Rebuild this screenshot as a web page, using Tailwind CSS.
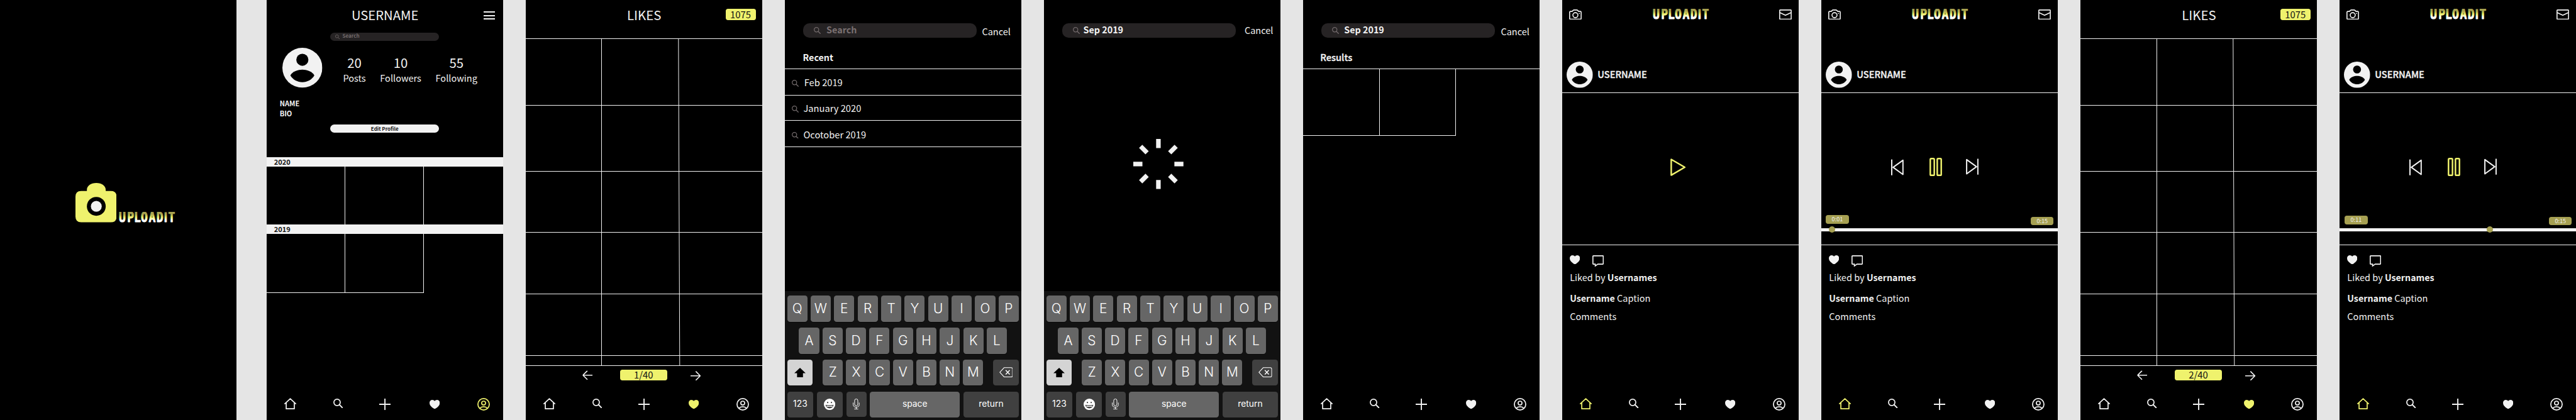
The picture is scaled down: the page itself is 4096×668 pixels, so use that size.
<!DOCTYPE html>
<html lang="en">
<head>
<meta charset="utf-8">
<title>UPLOADIT</title>
<script src="https://cdn.jsdelivr.net/npm/@tailwindcss/browser@4"></script>
</head>
<body class="bg-[#e5e5e5] overflow-hidden font-['Noto_Sans_CJK_SC','Noto_Sans',sans-serif] text-[#f2f2f2]">

<svg class="hidden">
  <symbol id="home" viewBox="0 0 21 20"><path d="M1 10 10.5 1.2 20 10M3.4 8v11h14.2V8" fill="none" stroke="currentColor" stroke-width="1.9" stroke-linejoin="round" stroke-linecap="round"/></symbol>
  <symbol id="search" viewBox="0 0 17 17"><circle cx="6.6" cy="6.6" r="5.6" fill="none" stroke="currentColor" stroke-width="1.9"/><path d="m10.8 10.8 5.2 5.2" stroke="currentColor" stroke-width="2.1" stroke-linecap="round"/></symbol>
  <symbol id="plus" viewBox="0 0 20 20"><path d="M10 0v20M0 10h20" stroke="currentColor" stroke-width="2.1"/></symbol>
  <symbol id="heart" viewBox="0 0 18 16"><path d="M9 16C7.600 15.400 4 13.200 1.700 10.200-.6 7-.4 3 1.500 1.300 3.700-.6 7.400-.2 9 2.300c1.600-2.500 5.300-2.900 7.500-1C18.400 3 18.600 7 16.300 10.200 14 13.200 10.400 15.400 9 16Z" fill="currentColor"/></symbol>
  <symbol id="user" viewBox="0 0 22 22"><g fill="none" stroke="currentColor" stroke-width="1.9"><circle cx="11" cy="11" r="10"/><circle cx="11" cy="8.900" r="3.400"/><path d="M4.200 18c1.900-1.900 4.300-2.600 6.800-2.600s4.900.7 6.800 2.600"/></g></symbol>
  <symbol id="avatar" viewBox="0 0 70 70"><circle cx="35" cy="35" r="35" fill="#f2f2f2"/><circle cx="35" cy="21" r="10.600" fill="#000"/><path d="M14 48.500c3-7 14-10.300 21-10.300s18 3.300 21 10.300C51.500 56 43.500 60.300 35 60.300S18.500 56 14 48.500Z" fill="#000"/></symbol>
  <symbol id="camera" viewBox="0 0 22 18"><g fill="none" stroke="currentColor" stroke-width="1.800" stroke-linejoin="round"><path d="M2.400 3.500h2.900L7.200 1.500Q7.700.9 8.500.9h5q.8 0 1.300.6l1.900 2h2.900q1.500 0 1.500 1.500v10.600q0 1.500-1.500 1.500H2.400q-1.500 0-1.500-1.500V5q0-1.500 1.500-1.500Z"/><circle cx="11" cy="10" r="4.400"/></g><circle cx="17.800" cy="7" r="1" fill="currentColor"/></symbol>
  <symbol id="mail" viewBox="0 0 22 18"><g fill="none" stroke="currentColor" stroke-width="1.800" stroke-linejoin="round"><rect x=".9" y=".9" width="20.200" height="16.200" rx=".8"/><path d="M1 5.400 11 10.200 21 5.400"/></g></symbol>
  <symbol id="bubble" viewBox="0 0 20 20"><path d="M1.700.9h16.600q.8 0 .8.800v13q0 .8-.8.8H9.500L5 18.800v-3.300H1.700q-.8 0-.8-.8v-13q0-.8.8-.8Z" fill="none" stroke="currentColor" stroke-width="1.800"/></symbol>
  <symbol id="arrow" viewBox="0 0 18 17"><path d="M0 8.500h17M9.200.7 17 8.500l-7.800 7.800" fill="none" stroke="currentColor" stroke-width="1.800"/></symbol>
  <symbol id="skip" viewBox="0 0 22 29"><path d="M1.200 2v25L18.500 14.500ZM20.900.5v28" fill="none" stroke="currentColor" stroke-width="2.200" stroke-linejoin="round"/></symbol>
  <symbol id="pause" viewBox="0 0 22 32"><g fill="none" stroke="currentColor" stroke-width="2.700"><rect x="1.400" y="1.400" width="7" height="29.200" rx="1.500"/><rect x="13.600" y="1.400" width="7" height="29.200" rx="1.500"/></g></symbol>
  <symbol id="play" viewBox="0 0 27 31"><path d="M1.500 1.700v27.600l23.700-13.800Z" fill="none" stroke="currentColor" stroke-width="2.700" stroke-linejoin="round"/></symbol>
  <symbol id="wordmark" viewBox="0 0 100 20"><text transform="scale(.88 1)" x="1.200 17.800 31.300 45.200 60.800 76.200 91 99.500" y="17.800" font-family="DejaVu Sans Mono, monospace" font-weight="700" font-size="22.600" fill="url(#gold)" stroke="url(#gold)" stroke-width="1.100" stroke-linejoin="round">UPLOAD<tspan font-family="Roboto, sans-serif">I</tspan>T</text></symbol>
  <symbol id="spinner" viewBox="0 0 88 88"><g stroke="#f2f2f2" stroke-width="8"><path d="M44 0v16M44 72v16M0 44h16M72 44h16M12.900 12.900l11.300 11.300M63.800 63.800l11.300 11.300M75.100 12.900 63.800 24.200M24.200 63.800 12.900 75.100"/></g></symbol>
  <symbol id="shift" viewBox="0 0 20 17"><path d="M10 0 20 9.500h-4.800V16.500H4.800V9.500H0Z" fill="#000"/></symbol>
  <symbol id="erase" viewBox="0 0 24 18"><g fill="none" stroke="#fff" stroke-width="1.200" stroke-linejoin="round"><path d="M8.500.8h12.300q2.400 0 2.400 2.400v11.600q0 2.400-2.400 2.400H8.500L.9 9Z"/><path d="m11.200 5.300 7 7.400m0-7.400-7 7.400" stroke-width="1.600"/></g></symbol>
  <symbol id="smile" viewBox="0 0 20 20"><circle cx="10" cy="10" r="10" fill="#fff"/><circle cx="6.700" cy="6.800" r="1.200" fill="#404040"/><circle cx="13.300" cy="6.800" r="1.200" fill="#404040"/><path d="M3 10.800c2.500 1 11.500 1 14 0-.4 3.700-3.300 6.200-7 6.200s-6.600-2.500-7-6.200Z" fill="#404040"/><path d="M4.300 12.300c2.500.7 8.900.7 11.400 0-.2.800-.6 1.300-1 1.700-2 .6-7.400.6-9.400 0-.4-.4-.8-.9-1-1.700Z" fill="#fff"/></symbol>
  <symbol id="mic" viewBox="0 0 12 19"><g fill="none" stroke="#fff" stroke-width="1.100"><rect x="3.200" y=".6" width="5.600" height="12" rx="2.800"/><path d="M.7 7v3.200q0 4.800 5.300 4.800t5.300-4.800V7M6 15v3.200M2.500 18.300h7"/></g></symbol>
</svg>
<svg class="absolute size-0"><defs><linearGradient id="gold" gradientUnits="userSpaceOnUse" x1="0" y1="1" x2="0" y2="18.500"><stop offset=".08" stop-color="#a8a250"/><stop offset=".25" stop-color="#b9b656"/><stop offset=".48" stop-color="#f0f36d"/><stop offset=".76" stop-color="#fff"/></linearGradient></defs></svg>

<main id="board" class="flex h-[736px] w-[4513px] gap-[40px] [zoom:0.9076]"></main>

<script>
const icon = (id, cls) => `<svg class="shrink-0 ${cls}"><use href="#${id}"/></svg>`;
const phone = (body, cls = '') => `<section class="relative flex h-[736px] w-[414px] shrink-0 flex-col overflow-hidden bg-black ${cls}">${body}</section>`;

const nav = (active) => {
  const tint = (name) => name === active ? 'text-[#eff26d]' : 'text-[#f2f2f2]';
  return `<nav class="mt-auto flex h-[42px] shrink-0 items-start pl-[31px] pt-[3px]">
    ${icon('home', 'h-[20px] w-[21px] ' + tint('home'))}
    ${icon('search', 'ml-[65px] mt-[1px] size-[17px] ' + tint('search'))}
    ${icon('plus', 'ml-[63px] mt-[2px] size-[20px] ' + tint('plus'))}
    ${icon('heart', 'ml-[69px] mt-[4px] h-[16px] w-[18px] ' + tint('heart'))}
    ${icon('user', 'ml-[65px] size-[22px] ' + tint('user'))}
  </nav>`;
};

const searchBar = (text, textCls, cancelCls) => `<div class="flex h-[66px] shrink-0 items-start pl-[32px] pt-[41px]">
    <div class="flex h-[25px] w-[304px] shrink-0 items-center rounded-[11px] bg-[#262324] pl-[19px]">
      ${icon('search', 'size-[12px] text-[#726a6b]')}<span class="text-[15.8px] font-bold leading-[22px] -mt-[3px] ${textCls}">${text}</span>
    </div>
    <span class="text-[16px] leading-[20px] ${cancelCls}">Cancel</span>
  </div>`;

const key = (ch) => `<div class="flex h-[46px] w-[35.4px] shrink-0 items-center justify-center rounded-[4.6px] bg-[#666] pb-[1px] text-[23px] font-light shadow-[0_1px_0_#080808]">${ch}</div>`;
const keys = (s) => [...s].map(key).join('');
const keyboard = `<div class="mt-auto flex h-[226px] shrink-0 flex-col gap-[10px] bg-[#121212] px-[4px] pt-[8px] font-['Inter',sans-serif] text-white">
    <div class="flex justify-between">${keys('QWERTYUIOP')}</div>
    <div class="flex justify-between px-[20.8px]">${keys('ASDFGHJKL')}</div>
    <div class="flex justify-between">
      <div class="flex h-[46px] w-[45px] items-center justify-center rounded-[4.6px] bg-[#d4d4d4]">${icon('shift', 'h-[17px] w-[20px]')}</div>
      <div class="flex w-[281.400px] justify-between">${keys('ZXCVBNM')}</div>
      <div class="flex h-[45px] w-[45px] items-center justify-center rounded-[4.6px] bg-[#404040]">${icon('erase', 'h-[18px] w-[24px]')}</div>
    </div>
    <div class="flex gap-[6px] text-[15.3px]">
      <div class="flex h-[46px] w-[46px] items-center justify-center rounded-[4.6px] bg-[#404040] pb-[2px]">123</div>
      <div class="flex h-[46px] w-[46px] items-center justify-center rounded-[4.6px] bg-[#404040]">${icon('smile', 'size-[20px]')}</div>
      <div class="flex h-[45px] w-[35px] items-center justify-center rounded-[4.6px] bg-[#404040]">${icon('mic', 'h-[19px] w-[12px]')}</div>
      <div class="flex h-[46px] w-[158px] items-center justify-center rounded-[4.6px] bg-[#666] pb-[2px]">space</div>
      <div class="flex h-[46px] w-[97px] items-center justify-center rounded-[4.6px] bg-[#404040] pb-[2px]">return</div>
    </div>
  </div>`;

const splash = phone(`<div class="flex items-end gap-[3px] pl-[132px] pt-[321px]">
    <svg class="h-[69px] w-[72px]" viewBox="0 0 72 69"><path d="M10 14H20V12C20 5 27 0 36.500 0S53 5 53 12v2h9q10 0 10 10v35q0 10-10 10H10Q0 69 0 59V24Q0 14 10 14Z" fill="#eff26d"/><circle cx="36.500" cy="41" r="16.500"/><circle cx="36.500" cy="41" r="9.500" fill="#f2f2f2"/></svg>
    ${icon('wordmark', 'mb-[-1.500px] h-[20px] w-[100px]')}
  </div>`, 'mr-[13px]');

const stat = (n, label, cls) => `<div class="flex shrink-0 flex-col items-center ${cls}"><span class="text-[22.500px] leading-[26px]">${n}</span><span class="text-[16px] leading-[27px]">${label}</span></div>`;
const yearBar = (y) => `<div class="h-[17px] shrink-0 bg-[#f2f2f2] pl-[13px] text-[12.200px] font-bold leading-[17px] text-[#111]">${y}</div>`;
const menuLine = '<i class="border-t-[2.3px] border-[#f2f2f2]"></i>';
const profile = phone(`<header class="flex h-[57px] shrink-0 justify-center pt-[13px]">
      <h1 class="ml-[207.500px] w-0 flex justify-center text-[22.300px] leading-[26px]">USERNAME</h1>
      <div class="ml-auto mr-[14px] mt-[6.600px] flex w-[20px] flex-col gap-[4.100px]">${menuLine}${menuLine}${menuLine}</div>
    </header>
    <div class="ml-[111px] flex h-[15px] w-[191px] shrink-0 items-center rounded-full bg-[#262324] pl-[9px] text-[8.900px] font-bold leading-[14px] text-[#726a6b]">${icon('search', 'size-[8px]')}<span class="-mt-[2px] ml-[5px]">Search</span></div>
    <div class="mt-[12px] flex h-[93px] shrink-0 pl-[28px]">
      ${icon('avatar', 'size-[70px]')}
      ${stat(20, 'Posts', 'mt-[13px] ml-[36px]')}
      ${stat(10, 'Followers', 'mt-[13px] ml-[25px]')}
      ${stat(55, 'Following', 'mt-[13px] ml-[25px]')}
    </div>
    <p class="h-[41px] shrink-0 -mt-[5px] pl-[23px] text-[12.200px] font-bold leading-[18px]">NAME<br>BIO</p>
    <div class="ml-[111px] mt-[5px] h-[15px] w-[191px] shrink-0 rounded-full bg-[#f2f2f2] pl-[1px] text-center text-[8.800px] font-bold leading-[16px] text-[#111]">Edit Profile</div>
    <div class="mt-[42px] shrink-0">${yearBar(2020)}
      <div class="flex h-[101px]"><div class="w-[138px] border-r border-[#f2f2f2]"></div><div class="w-[138px] border-r border-[#f2f2f2]"></div></div>
    </div>
    ${yearBar(2019)}
    <div class="flex h-[103px] shrink-0"><div class="w-[138px] border-b border-r border-[#f2f2f2]"></div><div class="w-[138px] border-b border-r border-[#f2f2f2]"></div></div>
    ${nav('user')}`);

const row = (h) => `<div class="flex ${h} shrink-0 border-b border-[#f2f2f2]"><div class="w-[134px] border-r border-[#f2f2f2]"></div></div>`;
const likes = (page) => phone(`<header class="flex h-[68px] shrink-0 border-b border-[#f2f2f2] pt-[13px]">
      <h1 class="ml-[207.500px] flex w-0 justify-center text-[22.500px] leading-[26px]">LIKES</h1>
      <div class="ml-auto mr-[11px] mt-[2px] h-[20px] w-[53px] rounded-[4px] bg-[#eff26d] text-center text-[16.400px] leading-[20px] text-[#111]">1075</div>
    </header>
    ${row('h-[117px]')}${row('h-[116px]')}${row('h-[107px]')}${row('h-[108px]')}${row('h-[108px]')}${row('h-[17px]')}
    <svg class="absolute left-[260px] top-[68px] h-[573px] w-[20px]"><path d="M7.500 0 9.700 573" stroke="#f2f2f2" stroke-width="1.100"/></svg>
    <div class="flex h-[40px] items-start pl-[99px] pt-[7px]">
      ${icon('arrow', 'mt-[1px] h-[17px] w-[18px] rotate-180')}
      <div class="ml-[48px] h-[19px] w-[83px] rounded-[4px] bg-[#eff26d] text-center text-[16.400px] leading-[17px] text-[#111]">${page}/40</div>
      ${icon('arrow', 'ml-[41px] mt-[2px] h-[17px] w-[18px]')}
    </div>
    ${nav('heart')}`);

const recent = (t, h, pad) => `<li class="flex ${h} shrink-0 items-center border-b border-[#f2f2f2] pl-[12px]">${icon('search', 'mt-[5px] size-[12px] text-[#726a6b]')}<span class="mt-[2px] text-[16.200px] leading-[24px] ${pad}">${t}</span></li>`;
const searching = phone(`${searchBar('Search', 'text-[#7a7071] ml-[10px]', 'ml-[9.500px] mt-[4px]')}
    <h2 class="h-[55px] shrink-0 border-b border-[#f2f2f2] pl-[31.500px] pt-[22px] text-[15.800px] font-bold leading-[24px]">Recent</h2>
    <ul>${recent('Feb 2019', 'h-[46px]', 'ml-[10px]')}${recent('January 2020', 'h-[45px]', 'ml-[8.500px]')}${recent('Ocotober 2019', 'h-[46px]', 'ml-[8.500px]')}</ul>
    ${keyboard}`);

const loading = phone(`${searchBar('Sep 2019', 'ml-[6px]', 'ml-[15.500px] mt-[1.500px]')}
    <div class="pl-[157px] pt-[178px]">${icon('spinner', 'size-[88px]')}</div>
    ${keyboard}`);

const results = phone(`${searchBar('Sep 2019', 'ml-[9px]', 'ml-[10.500px] mt-[4px]')}
    <h2 class="h-[55px] shrink-0 border-b border-[#f2f2f2] pl-[30px] pt-[22px] text-[16.200px] font-medium leading-[24px] [-webkit-text-stroke:0.4px_#f2f2f2]">Results</h2>
    <div class="flex h-[117px]"><div class="w-[134px] border-b border-r border-[#f2f2f2]"></div><div class="w-[134px] border-b border-r border-[#f2f2f2]"></div></div>
    ${nav('')}`);

const chip = (t, cls) => `<div class="h-[15px] w-[40px] rounded-[4px] bg-[#a6a052] text-center text-[10px] leading-[14px] ${cls}">${t}</div>`;
const controls = (time, chipCls, dotCls) => `<div class="flex pl-[122px] pt-[114px]">
      ${icon('skip', 'mt-[2px] h-[29px] w-[22px] rotate-180')}
      ${icon('pause', 'ml-[46px] h-[32px] w-[22px] text-[#eff26d]')}
      ${icon('skip', 'ml-[41px] mt-[1px] h-[29px] w-[22px]')}
    </div>
    <div class="mt-auto flex h-[23px] items-start justify-between pr-[7px]">${chip(time, chipCls)}${chip('0:15', 'mt-[3px]')}</div>
    <div class="relative mb-[23px] h-[6px] shrink-0 bg-[#f2f2f2]"><i class="absolute -top-[3px] size-[11px] rounded-full bg-[#a6a052] ${dotCls}"></i></div>`;
const feed = (media) => phone(`<header class="flex h-[108px] shrink-0 items-start pl-[12px] pt-[16px]">
      ${icon('camera', 'h-[18px] w-[22px]')}
      ${icon('wordmark', 'ml-[124px] -mt-[1px] h-[20px] w-[100px]')}
      ${icon('mail', 'ml-[122px] h-[18px] w-[22px]')}
    </header>
    <div class="flex h-[55px] shrink-0 items-start border-b border-[#f2f2f2] pl-[8px]">${icon('avatar', 'size-[46px]')}<span class="ml-[8px] mt-[10px] text-[16.100px] font-medium leading-[24px] [-webkit-text-stroke:0.4px_#f2f2f2]">USERNAME</span></div>
    <div class="flex h-[267px] shrink-0 flex-col border-b border-[#f2f2f2]">${media}</div>
    <div class="flex h-[36px] shrink-0 items-start gap-[22px] pl-[13px] pt-[17px]">${icon('heart', 'h-[16px] w-[18px]')}${icon('bubble', 'size-[20px]')}</div>
    <div class="pl-[13.500px] text-[16px] leading-[24px]">
      <p class="mt-[8px]">Liked by <b class="text-[15.700px] font-bold">Usernames</b></p>
      <p class="mt-[12px]"><b class="text-[15.700px] font-bold">Username</b> Caption</p>
      <p class="mt-[8px]">Comments</p>
    </div>
    ${nav('home')}`);

document.getElementById('board').innerHTML = [
  splash, profile, likes(1), searching, loading, results,
  feed(`<div class="pl-[190px] pt-[115px] text-[#eff26d]">${icon('play', 'h-[31px] w-[27px]')}</div>`),
  feed(controls('0:01', 'ml-[8px]', 'left-[13px]')),
  likes(2),
  feed(controls('0:11', 'ml-[9px] mt-[1px]', 'left-[258px]')),
].join('');
</script>
</body>
</html>
